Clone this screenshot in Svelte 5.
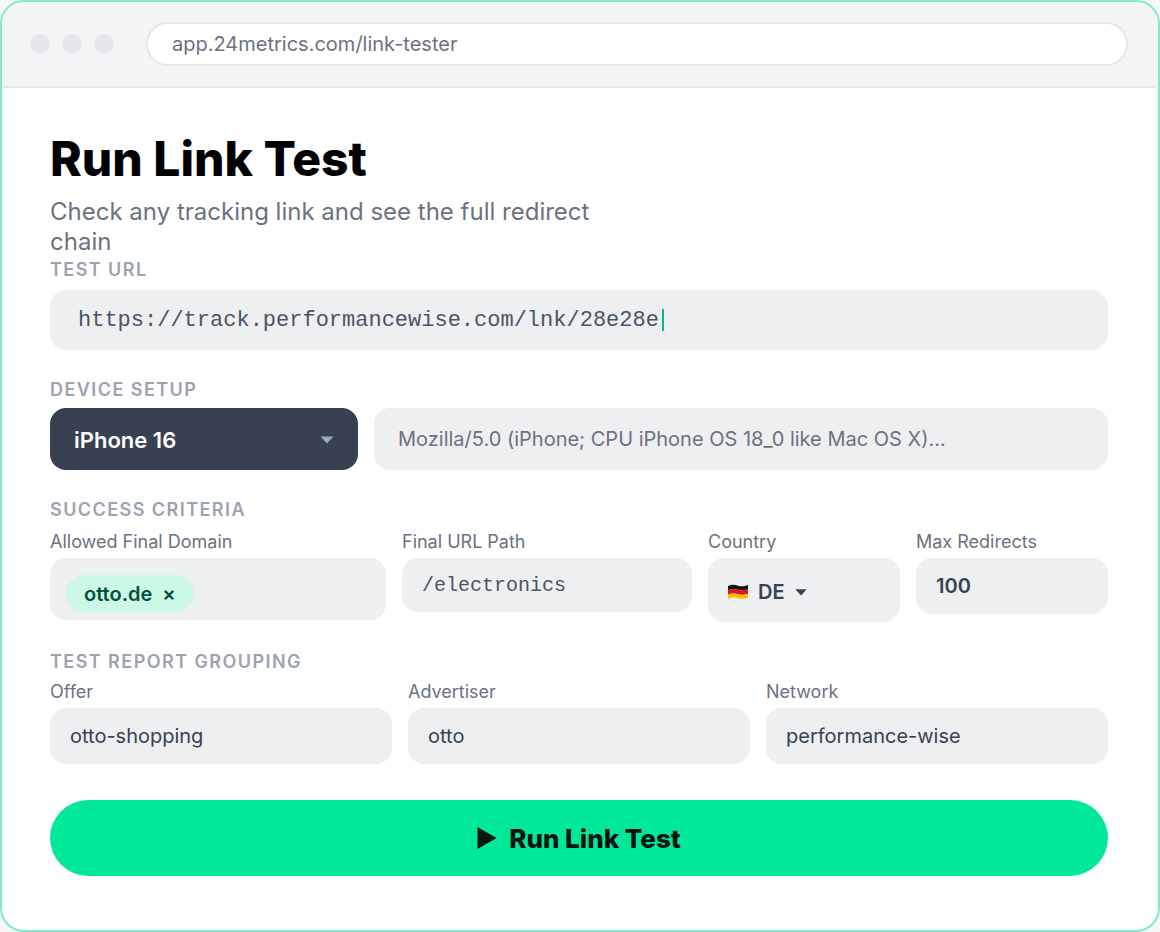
<script lang="ts">
    let testUrl = $state('https://track.performancewise.com/lnk/28e28e')
    let device = $state('iPhone 16')
    let userAgent = $state('Mozilla/5.0 (iPhone; CPU iPhone OS 18_0 like Mac OS X)...')
    let domains = $state(['otto.de'])
    let path = $state('/electronics')
    let country = $state('DE')
    let maxRedirects = $state('100')

    let grouping = $state([
        { id: 'offer', label: 'Offer', value: 'otto-shopping' },
        { id: 'advertiser', label: 'Advertiser', value: 'otto' },
        { id: 'network', label: 'Network', value: 'performance-wise' }
    ])

    const removeDomain = (domain: string) => {
        domains = domains.filter(d => d !== domain)
    }

    const runTest = (e: SubmitEvent) => {
        e.preventDefault()
    }
</script>

<div class="window">
    <header class="chrome">
        <div class="dots">
            <span></span>
            <span></span>
            <span></span>
        </div>
        <div class="address">app.24metrics.com/link-tester</div>
    </header>

    <form class="content" onsubmit={runTest}>
        <h1>Run Link Test</h1>
        <p class="intro">Check any tracking link and see the full redirect chain</p>

        <section>
            <h2><label for="test-url">Test URL</label></h2>
            <div class="field url">
                <!-- monospace, so the input can be as wide as its text and the caret follows it -->
                <input id="test-url" type="text" spellcheck="false" bind:value={testUrl} style="width: {testUrl.length}ch">
                <span class="caret"></span>
            </div>
        </section>

        <section>
            <h2>Device Setup</h2>
            <div class="device-row">
                <div class="field device">
                    <select aria-label="Device" bind:value={device}>
                        <option>iPhone 16</option>
                    </select>
                    <svg width="14" height="8" viewBox="0 0 14 8"><path d="M0.5 0.5h13L7 7.5z" fill="#9ca9bb" /></svg>
                </div>
                <input class="field agent" type="text" aria-label="User agent" bind:value={userAgent}>
            </div>
        </section>

        <section>
            <h2>Success Criteria</h2>
            <div class="criteria">
                <div>
                    <span class="label">Allowed Final Domain</span>
                    <div class="field domains">
                        {#each domains as domain}
                            <span class="chip">
                                {domain}
                                <button type="button" aria-label="Remove {domain}" onclick={() => removeDomain(domain)}>×</button>
                            </span>
                        {/each}
                    </div>
                </div>
                <div>
                    <label class="label" for="path">Final URL Path</label>
                    <input class="field path" id="path" type="text" spellcheck="false" bind:value={path}>
                </div>
                <div>
                    <label class="label" for="country">Country</label>
                    <div class="field country">
                        <svg width="20" height="16" viewBox="0 0 20 16">
                            <path d="M0 2.2C4 -0.2 7 0.8 10 1.7S16 2.6 20 1V5.4C16 7 13 6.6 10 5.8S4 4.4 0 6.6z" fill="#151515" />
                            <path d="M0 6.2C4 4.2 7 5 10 5.8S16 6.6 20 5V10C16 11.4 13 11 10 10.2S4 9 0 11z" fill="#e3141b" />
                            <path d="M0 10.6C4 8.8 7 9.4 10 10.2S16 11 20 9.6V13.8C16 15.4 13 14.9 10 14.2S4 13 0 15.2z" fill="#fdc20a" />
                        </svg>
                        <select id="country" bind:value={country}>
                            <option>DE</option>
                        </select>
                        <svg width="12" height="7" viewBox="0 0 12 7"><path d="M0.3 0.3h11.4L6 6.6z" fill="#374151" /></svg>
                    </div>
                </div>
                <div>
                    <label class="label" for="redirects">Max Redirects</label>
                    <input class="field strong" id="redirects" type="text" inputmode="numeric" bind:value={maxRedirects}>
                </div>
            </div>
        </section>

        <section>
            <h2>Test Report Grouping</h2>
            <div class="grouping">
                {#each grouping as item}
                    <div>
                        <label class="label" for={item.id}>{item.label}</label>
                        <input class="field" id={item.id} type="text" bind:value={item.value}>
                    </div>
                {/each}
            </div>
        </section>

        <button class="run" type="submit">
            <svg width="20" height="22" viewBox="0 0 20 22"><path d="M0.5 0L19.5 11L0.5 22z" fill="#04160f" /></svg>
            Run Link Test
        </button>
    </form>
</div>

<style>
    :global(body) {
        margin: 0;
        background: #f7f7f8;
    }

    .window {
        box-sizing: border-box;
        min-height: 100vh;
        padding-right: 2px;
        border: 2px solid #7debc5;
        border-radius: 24px;
        background: #fff;
        overflow: hidden;
        font-family: Inter, "Liberation Sans", sans-serif;
        color: #374151;
    }

    .chrome {
        display: flex;
        align-items: center;
        gap: 32px;
        padding: 20px 28px;
        background: #f3f4f6;
        border-bottom: 2px solid #e5e7eb;
    }

    .dots {
        display: flex;
        gap: 12px;
    }

    .dots span {
        width: 20px;
        height: 20px;
        border-radius: 50%;
        background: #e5e7eb;
    }

    .address {
        flex: 1;
        padding: 0 24px;
        border: 2px solid #e5e7eb;
        border-radius: 22px;
        background: #fff;
        font-size: 20px;
        line-height: 40px;
        color: #6b7280;
    }

    .content {
        padding: 43px 48px 54px;
    }

    h1 {
        margin: 0 0 10px;
        font-size: 48px;
        line-height: 56px;
        font-weight: 800;
        color: #000;
    }

    .intro {
        max-width: 580px;
        margin: 0 0 1px;
        font-size: 24px;
        line-height: 30px;
        color: #6b7280;
    }

    section {
        margin-bottom: 28px;
    }

    h2 {
        margin: 0 0 6px;
        font-size: 18px;
        line-height: 24px;
        font-weight: 600;
        letter-spacing: 0.08em;
        text-transform: uppercase;
        color: #9ca3af;
    }

    .label {
        display: block;
        margin-bottom: 4px;
        font-size: 18px;
        line-height: 24px;
        color: #6b7280;
    }

    input, select, button {
        margin: 0;
        padding: 0;
        border: 0;
        background: none;
        font: inherit;
        color: inherit;
        outline: none;
    }

    select {
        appearance: none;
    }

    .field {
        box-sizing: border-box;
        width: 100%;
        height: 56px;
        padding: 0 20px;
        border-radius: 16px;
        background: #edeff1;
        font-size: 20px;
    }

    .url {
        display: flex;
        align-items: center;
        gap: 3px;
        height: 60px;
        margin-top: 8px;
        padding: 0 28px;
        font-family: "Liberation Mono", monospace;
        font-size: 22px;
        color: #4b5563;
    }

    .caret {
        width: 2px;
        height: 22px;
        background: #10b981;
    }

    .device-row {
        display: flex;
        gap: 16px;
    }

    .device {
        display: flex;
        align-items: center;
        flex: none;
        width: 308px;
        height: 62px;
        padding: 2px 24px 0;
        background: #374151;
        color: #fff;
        font-size: 22px;
        font-weight: 600;
    }

    .device select {
        flex: 1;
    }

    .agent {
        flex: 1;
        height: 62px;
        padding: 0 24px;
        color: #6b7280;
    }

    .criteria {
        display: grid;
        grid-template-columns: 168fr 145fr 96fr 96fr;
        gap: 16px;
        margin-top: 8px;
    }

    .domains {
        display: flex;
        height: 62px;
        padding: 17px 16px 8px;
    }

    .chip {
        display: flex;
        align-items: center;
        gap: 10px;
        padding: 0 18px;
        border-radius: 20px;
        background: #ccf8e6;
        color: #065040;
        font-weight: 600;
    }

    .path {
        height: 54px;
        font-family: "Liberation Mono", monospace;
        color: #4b5563;
    }

    .country {
        display: flex;
        align-items: center;
        gap: 10px;
        height: 64px;
        padding-top: 4px;
        font-weight: 600;
    }

    .strong {
        font-weight: 600;
    }

    .grouping {
        display: grid;
        grid-template-columns: repeat(3, 1fr);
        gap: 16px;
    }

    .run {
        display: flex;
        align-items: center;
        justify-content: center;
        gap: 12px;
        width: 100%;
        height: 76px;
        margin-top: 36px;
        border-radius: 38px;
        background: #02e89b;
        color: #04160f;
        font-size: 26px;
        font-weight: 800;
    }
</style>
